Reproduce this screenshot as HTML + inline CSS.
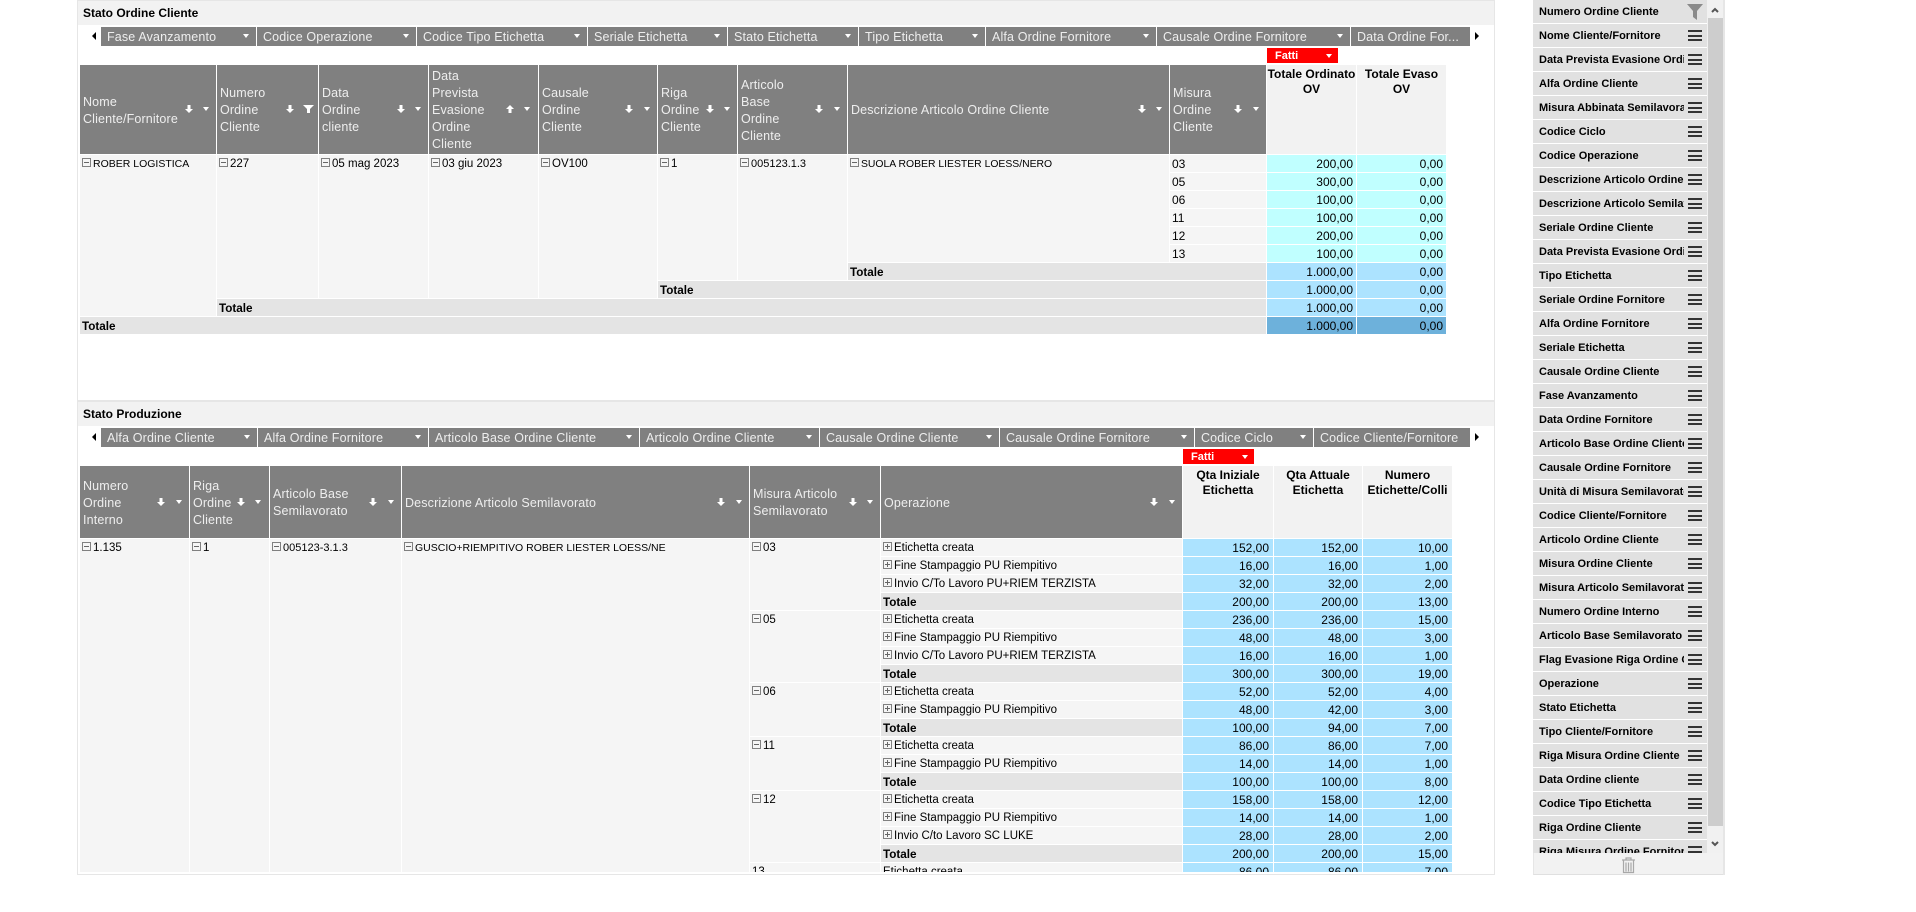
<!DOCTYPE html>
<html><head><meta charset="utf-8"><title>Stato</title>
<style>
html,body{margin:0;padding:0;background:#fff}
body{width:1916px;height:912px;overflow:hidden;position:relative;font-family:"Liberation Sans",sans-serif;color:#000}
.a,.a>*{position:absolute}
.a{left:0;top:0}
div{box-sizing:border-box;white-space:nowrap}
.ln{background:#e6e6e6}
.ph{background:#f2f2f2;font:bold 12px/24px "Liberation Sans",sans-serif;padding-left:6px}
.f{position:absolute;background:#808080;color:#eee;font-size:12.5px;letter-spacing:.15px;line-height:21px;padding-left:6px;height:19px;overflow:hidden}
.f b{position:absolute;right:7px;top:7px;width:0;height:0;border-left:3.5px solid transparent;border-right:3.5px solid transparent;border-top:4px solid #fff}
.la,.ra{position:absolute;width:0;height:0;border-top:4.5px solid transparent;border-bottom:4.5px solid transparent}
.la{border-right:4px solid #000}.ra{border-left:4px solid #000}
.h{position:absolute;background:#808080;color:#eee;font-size:12.5px;letter-spacing:.15px;line-height:17px;padding-left:3px;padding-top:2px;display:flex;align-items:center}
.m{position:absolute;background:#f2f2f2;font:bold 12px/15px "Liberation Sans",sans-serif;text-align:center;padding-top:2px}
.tri{position:absolute;width:0;height:0;border-left:3.5px solid transparent;border-right:3.5px solid transparent;border-top:4px solid #fff}
.fat{position:absolute;background:#f00;color:#fff;font-size:11px;font-weight:bold;line-height:17px;padding-left:8px;height:15px;width:71px}
.fat b{position:absolute;right:6px;top:6px;width:0;height:0;border-left:3.5px solid transparent;border-right:3.5px solid transparent;border-top:4px solid #fff}
svg{position:absolute;display:block}
.b{position:absolute;background:#f5f5f5;font-size:11.5px;line-height:19px;padding-left:13px}
.b i,.o i{position:absolute;left:2px;top:3px;width:9px;height:9px;border:1px solid #808080;box-sizing:border-box}
.b i:after,.o i:after{content:"";position:absolute;left:1px;top:3px;width:5px;height:1px;background:#666}
.o i.p:before{content:"";position:absolute;left:3px;top:1px;width:1px;height:5px;background:#666}
.t{position:absolute;background:#e4e4e4;font:bold 11.7px/19px "Liberation Sans",sans-serif;padding-left:2px;height:17px}
.n{position:absolute;height:17px;font-size:12px;line-height:18px;text-align:right;padding-right:3px}
.c{background:#c0ffff}.l{background:#ace3ff}.d{background:#6db1db}
.v{position:absolute;background:#f5f5f5;font-size:12px;line-height:18px;padding-left:2px;height:17px}
.r{position:absolute;left:0;width:0;height:17px}
.o{position:absolute;left:881px;width:301px;height:17px;background:#f5f5f5;font-size:11.5px;line-height:19px;padding-left:13px}
.o.tt{background:#e4e4e4;font:bold 11.7px/19px "Liberation Sans",sans-serif;padding-left:2px}
.o.u{padding-left:2px}
.n1,.n2,.n3{position:absolute;top:0;height:17px;background:#ace3ff;font-size:12px;line-height:18px;text-align:right;padding-right:4px}
.n1{left:1183px;width:90px}.n2{left:1274px;width:88px}.n3{left:1363px;width:89px}
#side{position:absolute;left:1533px;top:0;width:174px;height:853px;overflow:hidden}
.si{position:relative;height:23px;margin-bottom:1px;background:#e1e1e1}
.si span{position:absolute;left:6px;top:0;width:145px;overflow:hidden;font:bold 11px/24px "Liberation Sans",sans-serif;color:#000}
.si u{position:absolute;left:155px;width:14px;height:2px;background:#333}
.si u.x{top:6px}.si u.y{top:11px}.si u.z{top:15px}
</style></head><body>
<svg width="0" height="0" style="position:absolute"><defs>
<path id="dn" d="M2.5 0h3v4H8L4 8 0 4h2.5z" fill="#fff"/>
<path id="up" d="M2.5 8h3V4H8L4 0 0 4h2.5z" fill="#fff"/>
<path id="fn" d="M0 0h11L7 4v4H4V4z" fill="#fff"/>
</defs></svg>

<!-- panel frames -->
<div class="ln" style="position:absolute;left:77px;top:0;width:1px;height:875px"></div>
<div class="ln" style="position:absolute;left:1494px;top:0;width:1px;height:875px"></div>
<div class="ln" style="position:absolute;left:77px;top:874px;width:1418px;height:1px"></div>
<div class="ln" style="position:absolute;left:77px;top:0;width:1418px;height:1px"></div>
<div class="ln" style="position:absolute;left:77px;top:400px;width:1418px;height:2px"></div>

<!-- PANEL 1 -->
<div class="ph" style="position:absolute;left:78px;top:1px;width:1416px;height:24px;line-height:25px;padding-left:5px">Stato Ordine Cliente</div>
<div class="la" style="left:92px;top:32px"></div>
<div class="f" style="left:101px;top:27px;width:155px">Fase Avanzamento<b></b></div>
<div class="f" style="left:257px;top:27px;width:159px">Codice Operazione<b></b></div>
<div class="f" style="left:417px;top:27px;width:170px">Codice Tipo Etichetta<b></b></div>
<div class="f" style="left:588px;top:27px;width:139px">Seriale Etichetta<b></b></div>
<div class="f" style="left:728px;top:27px;width:130px">Stato Etichetta<b></b></div>
<div class="f" style="left:859px;top:27px;width:126px">Tipo Etichetta<b></b></div>
<div class="f" style="left:986px;top:27px;width:170px">Alfa Ordine Fornitore<b></b></div>
<div class="f" style="left:1157px;top:27px;width:193px">Causale Ordine Fornitore<b></b></div>
<div class="f" style="left:1351px;top:27px;width:119px">Data Ordine For...</div>
<div class="ra" style="left:1475px;top:32px"></div>
<div class="fat" style="left:1267px;top:48px">Fatti<b></b></div>

<div class="h" style="left:80px;top:65px;width:136px;height:89px">Nome<br>Cliente/Fornitore</div>
<div class="h" style="left:217px;top:65px;width:101px;height:89px">Numero<br>Ordine<br>Cliente</div>
<div class="h" style="left:319px;top:65px;width:109px;height:89px">Data<br>Ordine<br>cliente</div>
<div class="h" style="left:429px;top:65px;width:109px;height:89px">Data<br>Prevista<br>Evasione<br>Ordine<br>Cliente</div>
<div class="h" style="left:539px;top:65px;width:118px;height:89px">Causale<br>Ordine<br>Cliente</div>
<div class="h" style="left:658px;top:65px;width:79px;height:89px">Riga<br>Ordine<br>Cliente</div>
<div class="h" style="left:738px;top:65px;width:109px;height:89px">Articolo<br>Base<br>Ordine<br>Cliente</div>
<div class="h" style="left:848px;top:65px;width:321px;height:89px">Descrizione Articolo Ordine Cliente</div>
<div class="h" style="left:1170px;top:65px;width:96px;height:89px">Misura<br>Ordine<br>Cliente</div>
<div class="m" style="left:1267px;top:65px;width:89px;height:89px">Totale Ordinato<br>OV</div>
<div class="m" style="left:1357px;top:65px;width:89px;height:89px">Totale Evaso<br>OV</div>

<svg style="left:185px;top:105px" width="8" height="8"><use href="#dn"/></svg><div class="tri" style="left:203px;top:107px"></div>
<svg style="left:286px;top:105px" width="8" height="8"><use href="#dn"/></svg><svg style="left:303px;top:105px" width="11" height="8"><use href="#fn"/></svg>
<svg style="left:397px;top:105px" width="8" height="8"><use href="#dn"/></svg><div class="tri" style="left:415px;top:107px"></div>
<svg style="left:506px;top:105px" width="8" height="8"><use href="#up"/></svg><div class="tri" style="left:524px;top:107px"></div>
<svg style="left:625px;top:105px" width="8" height="8"><use href="#dn"/></svg><div class="tri" style="left:644px;top:107px"></div>
<svg style="left:706px;top:105px" width="8" height="8"><use href="#dn"/></svg><div class="tri" style="left:724px;top:107px"></div>
<svg style="left:815px;top:105px" width="8" height="8"><use href="#dn"/></svg><div class="tri" style="left:834px;top:107px"></div>
<svg style="left:1138px;top:105px" width="8" height="8"><use href="#dn"/></svg><div class="tri" style="left:1156px;top:107px"></div>
<svg style="left:1234px;top:105px" width="8" height="8"><use href="#dn"/></svg><div class="tri" style="left:1253px;top:107px"></div>

<div class="b" style="left:80px;top:155px;width:136px;height:161px;font-size:10.5px"><i></i>ROBER LOGISTICA</div>
<div class="b" style="left:217px;top:155px;width:101px;height:143px"><i></i>227</div>
<div class="b" style="left:319px;top:155px;width:109px;height:143px"><i></i>05 mag 2023</div>
<div class="b" style="left:429px;top:155px;width:109px;height:143px"><i></i>03 giu 2023</div>
<div class="b" style="left:539px;top:155px;width:118px;height:143px"><i></i>OV100</div>
<div class="b" style="left:658px;top:155px;width:79px;height:125px"><i></i>1</div>
<div class="b" style="left:738px;top:155px;width:109px;height:125px;font-size:11px"><i></i>005123.1.3</div>
<div class="b" style="left:848px;top:155px;width:321px;height:107px;font-size:10.4px"><i></i>SUOLA ROBER LIESTER LOESS/NERO</div>

<div class="v" style="left:1170px;top:155px;width:96px">03</div>
<div class="v" style="left:1170px;top:173px;width:96px">05</div>
<div class="v" style="left:1170px;top:191px;width:96px">06</div>
<div class="v" style="left:1170px;top:209px;width:96px">11</div>
<div class="v" style="left:1170px;top:227px;width:96px">12</div>
<div class="v" style="left:1170px;top:245px;width:96px">13</div>

<div class="t" style="left:848px;top:263px;width:418px">Totale</div>
<div class="t" style="left:658px;top:281px;width:608px">Totale</div>
<div class="t" style="left:217px;top:299px;width:1049px">Totale</div>
<div class="t" style="left:80px;top:317px;width:1186px">Totale</div>

<div class="n c" style="left:1267px;top:155px;width:89px">200,00</div><div class="n c" style="left:1357px;top:155px;width:89px">0,00</div>
<div class="n c" style="left:1267px;top:173px;width:89px">300,00</div><div class="n c" style="left:1357px;top:173px;width:89px">0,00</div>
<div class="n c" style="left:1267px;top:191px;width:89px">100,00</div><div class="n c" style="left:1357px;top:191px;width:89px">0,00</div>
<div class="n c" style="left:1267px;top:209px;width:89px">100,00</div><div class="n c" style="left:1357px;top:209px;width:89px">0,00</div>
<div class="n c" style="left:1267px;top:227px;width:89px">200,00</div><div class="n c" style="left:1357px;top:227px;width:89px">0,00</div>
<div class="n c" style="left:1267px;top:245px;width:89px">100,00</div><div class="n c" style="left:1357px;top:245px;width:89px">0,00</div>
<div class="n l" style="left:1267px;top:263px;width:89px">1.000,00</div><div class="n l" style="left:1357px;top:263px;width:89px">0,00</div>
<div class="n l" style="left:1267px;top:281px;width:89px">1.000,00</div><div class="n l" style="left:1357px;top:281px;width:89px">0,00</div>
<div class="n l" style="left:1267px;top:299px;width:89px">1.000,00</div><div class="n l" style="left:1357px;top:299px;width:89px">0,00</div>
<div class="n d" style="left:1267px;top:317px;width:89px">1.000,00</div><div class="n d" style="left:1357px;top:317px;width:89px">0,00</div>

<!-- PANEL 2 -->
<div class="ph" style="position:absolute;left:78px;top:402px;width:1416px;height:24px;line-height:25px;padding-left:5px">Stato Produzione</div>
<div class="la" style="left:92px;top:433px"></div>
<div class="f" style="left:101px;top:428px;width:156px">Alfa Ordine Cliente<b></b></div>
<div class="f" style="left:258px;top:428px;width:170px">Alfa Ordine Fornitore<b></b></div>
<div class="f" style="left:429px;top:428px;width:210px">Articolo Base Ordine Cliente<b></b></div>
<div class="f" style="left:640px;top:428px;width:179px">Articolo Ordine Cliente<b></b></div>
<div class="f" style="left:820px;top:428px;width:179px">Causale Ordine Cliente<b></b></div>
<div class="f" style="left:1000px;top:428px;width:194px">Causale Ordine Fornitore<b></b></div>
<div class="f" style="left:1195px;top:428px;width:118px">Codice Ciclo<b></b></div>
<div class="f" style="left:1314px;top:428px;width:156px">Codice Cliente/Fornitore</div>
<div class="ra" style="left:1475px;top:433px"></div>
<div class="fat" style="left:1183px;top:449px">Fatti<b></b></div>

<div class="h" style="left:80px;top:466px;width:109px;height:72px">Numero<br>Ordine<br>Interno</div>
<div class="h" style="left:190px;top:466px;width:79px;height:72px">Riga<br>Ordine<br>Cliente</div>
<div class="h" style="left:270px;top:466px;width:131px;height:72px">Articolo Base<br>Semilavorato</div>
<div class="h" style="left:402px;top:466px;width:347px;height:72px">Descrizione Articolo Semilavorato</div>
<div class="h" style="left:750px;top:466px;width:130px;height:72px">Misura Articolo<br>Semilavorato</div>
<div class="h" style="left:881px;top:466px;width:301px;height:72px">Operazione</div>
<div class="m" style="left:1183px;top:466px;width:90px;height:72px">Qta Iniziale<br>Etichetta</div>
<div class="m" style="left:1274px;top:466px;width:88px;height:72px">Qta Attuale<br>Etichetta</div>
<div class="m" style="left:1363px;top:466px;width:89px;height:72px">Numero<br>Etichette/Colli</div>

<svg style="left:157px;top:498px" width="8" height="8"><use href="#dn"/></svg><div class="tri" style="left:176px;top:500px"></div>
<svg style="left:237px;top:498px" width="8" height="8"><use href="#dn"/></svg><div class="tri" style="left:255px;top:500px"></div>
<svg style="left:369px;top:498px" width="8" height="8"><use href="#dn"/></svg><div class="tri" style="left:388px;top:500px"></div>
<svg style="left:717px;top:498px" width="8" height="8"><use href="#dn"/></svg><div class="tri" style="left:736px;top:500px"></div>
<svg style="left:849px;top:498px" width="8" height="8"><use href="#dn"/></svg><div class="tri" style="left:867px;top:500px"></div>
<svg style="left:1150px;top:498px" width="8" height="8"><use href="#dn"/></svg><div class="tri" style="left:1169px;top:500px"></div>

<div class="a" style="width:1916px;height:872px;overflow:hidden">
<div class="b" style="left:80px;top:539px;width:109px;height:340px"><i></i>1.135</div>
<div class="b" style="left:190px;top:539px;width:79px;height:340px"><i></i>1</div>
<div class="b" style="left:270px;top:539px;width:131px;height:340px;font-size:11px"><i></i>005123-3.1.3</div>
<div class="b" style="left:402px;top:539px;width:347px;height:340px;font-size:10.5px"><i></i>GUSCIO+RIEMPITIVO ROBER LIESTER LOESS/NE</div>
<div class="b" style="left:750px;top:539px;width:130px;height:71px"><i></i>03</div>
<div class="b" style="left:750px;top:611px;width:130px;height:71px"><i></i>05</div>
<div class="b" style="left:750px;top:683px;width:130px;height:53px"><i></i>06</div>
<div class="b" style="left:750px;top:737px;width:130px;height:53px"><i></i>11</div>
<div class="b" style="left:750px;top:791px;width:130px;height:71px"><i></i>12</div>
<div class="b" style="left:750px;top:863px;width:130px;height:17px;padding-left:2px">13</div>

<div class="r" style="top:539px"><div class="o"><i class="p"></i>Etichetta creata</div><div class="n1">152,00</div><div class="n2">152,00</div><div class="n3">10,00</div></div>
<div class="r" style="top:557px"><div class="o"><i class="p"></i>Fine Stampaggio PU Riempitivo</div><div class="n1">16,00</div><div class="n2">16,00</div><div class="n3">1,00</div></div>
<div class="r" style="top:575px"><div class="o"><i class="p"></i>Invio C/To Lavoro PU+RIEM TERZISTA</div><div class="n1">32,00</div><div class="n2">32,00</div><div class="n3">2,00</div></div>
<div class="r" style="top:593px"><div class="o tt">Totale</div><div class="n1">200,00</div><div class="n2">200,00</div><div class="n3">13,00</div></div>
<div class="r" style="top:611px"><div class="o"><i class="p"></i>Etichetta creata</div><div class="n1">236,00</div><div class="n2">236,00</div><div class="n3">15,00</div></div>
<div class="r" style="top:629px"><div class="o"><i class="p"></i>Fine Stampaggio PU Riempitivo</div><div class="n1">48,00</div><div class="n2">48,00</div><div class="n3">3,00</div></div>
<div class="r" style="top:647px"><div class="o"><i class="p"></i>Invio C/To Lavoro PU+RIEM TERZISTA</div><div class="n1">16,00</div><div class="n2">16,00</div><div class="n3">1,00</div></div>
<div class="r" style="top:665px"><div class="o tt">Totale</div><div class="n1">300,00</div><div class="n2">300,00</div><div class="n3">19,00</div></div>
<div class="r" style="top:683px"><div class="o"><i class="p"></i>Etichetta creata</div><div class="n1">52,00</div><div class="n2">52,00</div><div class="n3">4,00</div></div>
<div class="r" style="top:701px"><div class="o"><i class="p"></i>Fine Stampaggio PU Riempitivo</div><div class="n1">48,00</div><div class="n2">42,00</div><div class="n3">3,00</div></div>
<div class="r" style="top:719px"><div class="o tt">Totale</div><div class="n1">100,00</div><div class="n2">94,00</div><div class="n3">7,00</div></div>
<div class="r" style="top:737px"><div class="o"><i class="p"></i>Etichetta creata</div><div class="n1">86,00</div><div class="n2">86,00</div><div class="n3">7,00</div></div>
<div class="r" style="top:755px"><div class="o"><i class="p"></i>Fine Stampaggio PU Riempitivo</div><div class="n1">14,00</div><div class="n2">14,00</div><div class="n3">1,00</div></div>
<div class="r" style="top:773px"><div class="o tt">Totale</div><div class="n1">100,00</div><div class="n2">100,00</div><div class="n3">8,00</div></div>
<div class="r" style="top:791px"><div class="o"><i class="p"></i>Etichetta creata</div><div class="n1">158,00</div><div class="n2">158,00</div><div class="n3">12,00</div></div>
<div class="r" style="top:809px"><div class="o"><i class="p"></i>Fine Stampaggio PU Riempitivo</div><div class="n1">14,00</div><div class="n2">14,00</div><div class="n3">1,00</div></div>
<div class="r" style="top:827px"><div class="o"><i class="p"></i>Invio C/to Lavoro SC LUKE</div><div class="n1">28,00</div><div class="n2">28,00</div><div class="n3">2,00</div></div>
<div class="r" style="top:845px"><div class="o tt">Totale</div><div class="n1">200,00</div><div class="n2">200,00</div><div class="n3">15,00</div></div>
<div class="r" style="top:863px"><div class="o u">Etichetta creata</div><div class="n1">86,00</div><div class="n2">86,00</div><div class="n3">7,00</div></div>
</div>

<!-- SIDEBAR -->
<div id="side">
<div class="si"><span>Numero Ordine Cliente</span><svg style="left:154px;top:4px" width="16" height="16"><path d="M0 0h16L10 7v9L6 13V7z" fill="#8a8a8a"/></svg></div>
<div class="si"><span>Nome Cliente/Fornitore</span><u class="x"></u><u class="y"></u><u class="z"></u></div>
<div class="si"><span>Data Prevista Evasione Ordine Cliente</span><u class="x"></u><u class="y"></u><u class="z"></u></div>
<div class="si"><span>Alfa Ordine Cliente</span><u class="x"></u><u class="y"></u><u class="z"></u></div>
<div class="si"><span>Misura Abbinata Semilavorato</span><u class="x"></u><u class="y"></u><u class="z"></u></div>
<div class="si"><span>Codice Ciclo</span><u class="x"></u><u class="y"></u><u class="z"></u></div>
<div class="si"><span>Codice Operazione</span><u class="x"></u><u class="y"></u><u class="z"></u></div>
<div class="si"><span>Descrizione Articolo Ordine Cliente</span><u class="x"></u><u class="y"></u><u class="z"></u></div>
<div class="si"><span>Descrizione Articolo Semilavorato</span><u class="x"></u><u class="y"></u><u class="z"></u></div>
<div class="si"><span>Seriale Ordine Cliente</span><u class="x"></u><u class="y"></u><u class="z"></u></div>
<div class="si"><span>Data Prevista Evasione Ordine Fornitore</span><u class="x"></u><u class="y"></u><u class="z"></u></div>
<div class="si"><span>Tipo Etichetta</span><u class="x"></u><u class="y"></u><u class="z"></u></div>
<div class="si"><span>Seriale Ordine Fornitore</span><u class="x"></u><u class="y"></u><u class="z"></u></div>
<div class="si"><span>Alfa Ordine Fornitore</span><u class="x"></u><u class="y"></u><u class="z"></u></div>
<div class="si"><span>Seriale Etichetta</span><u class="x"></u><u class="y"></u><u class="z"></u></div>
<div class="si"><span>Causale Ordine Cliente</span><u class="x"></u><u class="y"></u><u class="z"></u></div>
<div class="si"><span>Fase Avanzamento</span><u class="x"></u><u class="y"></u><u class="z"></u></div>
<div class="si"><span>Data Ordine Fornitore</span><u class="x"></u><u class="y"></u><u class="z"></u></div>
<div class="si"><span>Articolo Base Ordine Cliente</span><u class="x"></u><u class="y"></u><u class="z"></u></div>
<div class="si"><span>Causale Ordine Fornitore</span><u class="x"></u><u class="y"></u><u class="z"></u></div>
<div class="si"><span>Unità di Misura Semilavorato</span><u class="x"></u><u class="y"></u><u class="z"></u></div>
<div class="si"><span>Codice Cliente/Fornitore</span><u class="x"></u><u class="y"></u><u class="z"></u></div>
<div class="si"><span>Articolo Ordine Cliente</span><u class="x"></u><u class="y"></u><u class="z"></u></div>
<div class="si"><span>Misura Ordine Cliente</span><u class="x"></u><u class="y"></u><u class="z"></u></div>
<div class="si"><span>Misura Articolo Semilavorato</span><u class="x"></u><u class="y"></u><u class="z"></u></div>
<div class="si"><span>Numero Ordine Interno</span><u class="x"></u><u class="y"></u><u class="z"></u></div>
<div class="si"><span>Articolo Base Semilavorato</span><u class="x"></u><u class="y"></u><u class="z"></u></div>
<div class="si"><span>Flag Evasione Riga Ordine Cliente</span><u class="x"></u><u class="y"></u><u class="z"></u></div>
<div class="si"><span>Operazione</span><u class="x"></u><u class="y"></u><u class="z"></u></div>
<div class="si"><span>Stato Etichetta</span><u class="x"></u><u class="y"></u><u class="z"></u></div>
<div class="si"><span>Tipo Cliente/Fornitore</span><u class="x"></u><u class="y"></u><u class="z"></u></div>
<div class="si"><span>Riga Misura Ordine Cliente</span><u class="x"></u><u class="y"></u><u class="z"></u></div>
<div class="si"><span>Data Ordine cliente</span><u class="x"></u><u class="y"></u><u class="z"></u></div>
<div class="si"><span>Codice Tipo Etichetta</span><u class="x"></u><u class="y"></u><u class="z"></u></div>
<div class="si"><span>Riga Ordine Cliente</span><u class="x"></u><u class="y"></u><u class="z"></u></div>
<div class="si"><span>Riga Misura Ordine Fornitore</span><u class="x"></u><u class="y"></u><u class="z"></u></div>
</div>

<div style="position:absolute;left:1707px;top:0;width:16px;height:853px;background:#f1f1f1"></div>
<div style="position:absolute;left:1708px;top:18px;width:15px;height:808px;background:#cdcdcd"></div>
<div class="ln" style="position:absolute;left:1723px;top:0;width:2px;height:875px"></div>
<svg style="left:1711px;top:7px" width="8" height="6"><path d="M1 5L4 2l3 3" fill="none" stroke="#555" stroke-width="2"/></svg>
<svg style="left:1711px;top:841px" width="8" height="6"><path d="M1 1l3 3 3-3" fill="none" stroke="#555" stroke-width="2"/></svg>
<div style="position:absolute;left:1533px;top:853px;width:190px;height:22px;background:#f2f2f2;border-bottom:1px solid #e0e0e0;border-left:1px solid #e6e6e6"></div>
<svg style="left:1621px;top:857px" width="15" height="17"><path d="M1 3h13M5 3V1h5v2M2.500 3.500v12h10v-12M5 5.500v9M7.500 5.500v9M10 5.500v9" fill="none" stroke="#a8a8a8" stroke-width="1.200"/></svg>
</body></html>
